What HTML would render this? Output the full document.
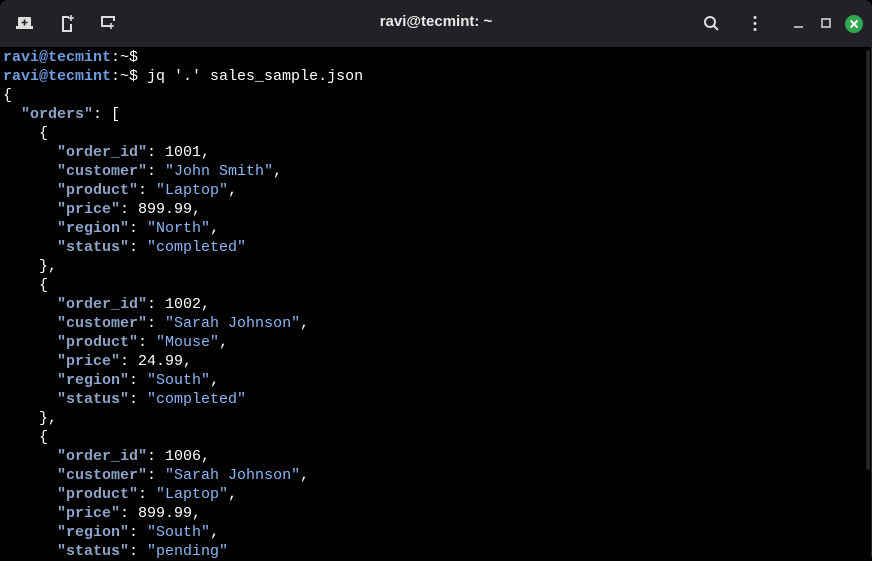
<!DOCTYPE html>
<html><head><meta charset="utf-8"><style>
html,body{margin:0;padding:0;width:872px;height:557px;overflow:hidden;background:#000}
.tb{position:absolute;left:0;top:0;width:872px;height:47px;background:#222226;border-radius:8px 8px 0 0}
.title{position:absolute;left:0;right:0;top:13px;text-align:center;color:#e8e8e8;font:bold 15px "Liberation Sans",sans-serif}
.term{position:absolute;left:3px;top:48px;font:15px/19px "Liberation Mono",monospace;color:#fff;white-space:pre;letter-spacing:0}
.p{color:#6f9de0;font-weight:bold}
.k{color:#8ea3c6;font-weight:bold}
.s{color:#8ab6f2}
.sb{position:absolute;left:866px;top:50px;width:4px;height:420px;background:#252527;border-radius:2px}
.edge{position:absolute;left:871px;top:47px;width:1px;height:510px;background:#2a2a2d}
.close{position:absolute;left:845px;top:15px;width:18px;height:18px;border-radius:50%;background:#2fa84f}
</style></head><body>
<div class="tb">
<svg width="872" height="47" style="position:absolute;left:0;top:0" fill="none" stroke="#ddd" stroke-width="2">
<rect x="18" y="17" width="13" height="11" rx="1" fill="#ddd" stroke="none"/><rect x="16" y="26" width="17" height="3" fill="#ddd" stroke="none"/>
<path d="M24.5 19.5v6M21.5 22.5h6" stroke="#222226" stroke-width="1.6"/>
<path d="M69 17h-6v14h8v-7"/><path d="M71 15v6M68 18h6" stroke-width="1.6"/>
<path d="M110 26h-8v-9h12v4"/><path d="M111 23v6M108 26h6" stroke-width="1.6"/>
<circle cx="710" cy="22" r="5"/><path d="M714 26l4 4"/>
<circle cx="755" cy="17.5" r="1.5" fill="#ddd" stroke="none"/><circle cx="755" cy="23.5" r="1.5" fill="#ddd" stroke="none"/><circle cx="755" cy="29.5" r="1.5" fill="#ddd" stroke="none"/>
<path d="M794 27h9" stroke-width="1.5"/>
<rect x="822" y="19" width="8" height="8" stroke-width="1.5"/>
</svg>
<div class="title">ravi@tecmint: ~</div>
<div class="close"></div>
<svg width="18" height="18" style="position:absolute;left:845px;top:15px" stroke="#fff" stroke-width="2"><path d="M5.5 5.5l7 7M12.5 5.5l-7 7"/></svg>
</div>
<div class="term"><span class="p">ravi@tecmint</span>:~$
<span class="p">ravi@tecmint</span>:~$ jq '.' sales_sample.json
{
  <span class="k">"orders"</span>: [
    {
      <span class="k">"order_id"</span>: 1001,
      <span class="k">"customer"</span>: <span class="s">"John Smith"</span>,
      <span class="k">"product"</span>: <span class="s">"Laptop"</span>,
      <span class="k">"price"</span>: 899.99,
      <span class="k">"region"</span>: <span class="s">"North"</span>,
      <span class="k">"status"</span>: <span class="s">"completed"</span>
    },
    {
      <span class="k">"order_id"</span>: 1002,
      <span class="k">"customer"</span>: <span class="s">"Sarah Johnson"</span>,
      <span class="k">"product"</span>: <span class="s">"Mouse"</span>,
      <span class="k">"price"</span>: 24.99,
      <span class="k">"region"</span>: <span class="s">"South"</span>,
      <span class="k">"status"</span>: <span class="s">"completed"</span>
    },
    {
      <span class="k">"order_id"</span>: 1006,
      <span class="k">"customer"</span>: <span class="s">"Sarah Johnson"</span>,
      <span class="k">"product"</span>: <span class="s">"Laptop"</span>,
      <span class="k">"price"</span>: 899.99,
      <span class="k">"region"</span>: <span class="s">"South"</span>,
      <span class="k">"status"</span>: <span class="s">"pending"</span></div>
<div class="sb"></div>
<div class="edge"></div>
</body></html>
